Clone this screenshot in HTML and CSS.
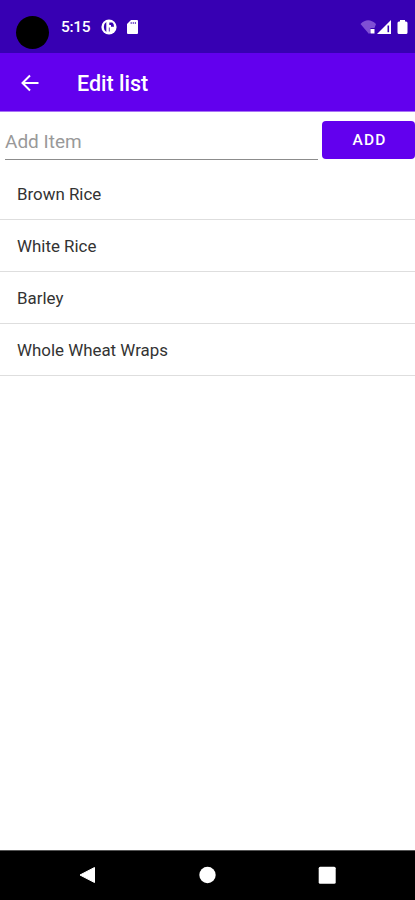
FILE: index.html
```html
<!DOCTYPE html>
<html lang="en">
<head>
<meta charset="utf-8">
<meta name="viewport" content="width=device-width, initial-scale=1">
<title>Edit list</title>
<link rel="stylesheet" href="styles.css">
</head>
<body>
<div class="screen">
  <div class="status">
    <span class="camera"></span>
    <span class="time">5:15</span>
    <svg class="app-icon" width="16" height="16" viewBox="0 0 16 16"><circle cx="8" cy="8" r="7.6" fill="#fff"/><path d="M5.300 3Q2.800 4.500 2.800 8t2.500 5z" fill="#3700b3"/><path d="M8.300 3.500h3Q13 4.500 13 7.800H10V6H8.300z" fill="#3700b3"/><path d="M8.300 8.500v4" stroke="#3700b3" stroke-width=".8"/></svg>
    <svg class="sd-icon" width="11" height="14" viewBox="0 0 11 14"><path d="M4 0h6q1 0 1 1v12q0 1-1 1H1q-1 0-1-1V4z" fill="#fff"/><path d="M4.200 2v2M6.300 2v2M8.400 2v2" stroke="#7653c9" stroke-width="1.200"/></svg>
    <span class="spacer"></span>
    <svg class="signals" width="48" height="16" viewBox="0 0 48 16"><path d="M.5 4Q8-3.500 16 4L14.500 8H10.500V12.500L9 14z" fill="#7f4fd4"/><path d="M10.500 9h4v4.500h-4z" fill="#fff"/><path d="M31 0v14H17z" fill="#fff"/><path d="M28.300 5.500v6.700" stroke="#3700b3" stroke-width="1.600"/><path d="M40 0h5v1.500h1q1.500 0 1.500 1.500v9.500q0 1.500-1.500 1.500h-7q-1.500 0-1.500-1.500V3q0-1.500 1.500-1.500h1z" fill="#fff"/></svg>
  </div>
  <header class="appbar">
    <svg class="back" width="19" height="18" viewBox="0 0 19 18"><path d="M18.500 9H2.500M10 1.500L2.500 9l7.500 7.500" fill="none" stroke="#fff" stroke-width="2"/></svg>
    <h1>Edit list</h1>
  </header>
  <main>
    <div class="add-row">
      <div class="field">Add Item</div>
      <button class="add">ADD</button>
    </div>
    <ul class="list">
      <li>Brown Rice</li>
      <li>White Rice</li>
      <li>Barley</li>
      <li>Whole Wheat Wraps</li>
    </ul>
  </main>
  <nav class="navbar">
    <svg width="18" height="18" viewBox="0 0 18 18"><path d="M16.500 1.500v15L2 9z" fill="#fff" stroke="#fff" stroke-linejoin="round"/></svg>
    <svg width="18" height="18" viewBox="0 0 18 18"><circle cx="9.500" cy="9" r="8.200" fill="#fff"/></svg>
    <svg width="18" height="18" viewBox="0 0 18 18"><rect x=".7" y=".7" width="17" height="17" rx="1.500" fill="#fff"/></svg>
  </nav>
</div>
</body>
</html>
```
FILE: styles.css
```css
* { box-sizing: border-box; }
body { margin: 0; font-family: Roboto, sans-serif; background: #fff; }
.screen { display: flex; flex-direction: column; height: 900px; overflow: hidden; }
.status { display: flex; flex: none; height: 53px; padding: 0 7px 0 16px; background: #3700b3; color: #fff; }
.camera { width: 33px; height: 33px; margin-top: 16px; border-radius: 50%; background: #000; }
.time { width: 40px; margin: 17px 0 0 12px; font-size: 15.5px; font-weight: 500; line-height: 21px; letter-spacing: -.3px; }
.app-icon { margin-top: 19px; }
.sd-icon { margin: 20px 0 0 10px; }
.spacer { flex: 1; }
.signals { margin-top: 20px; }
.appbar { display: flex; flex: none; align-items: center; height: 59px; padding: 3px 0 0 20px; background: #6200ee; border-bottom: 1px solid #a873f5; color: #fff; }
h1 { margin: 1px 0 0 38px; font-size: 21.5px; font-weight: 500; line-height: 28px; }
.back { margin-bottom: 2px; }
main { flex: 1; }
.add-row { display: flex; height: 56px; padding: 9px 0 0 5px; gap: 4px; }
.field { flex: 1; height: 39px; padding-top: 8px; border-bottom: 1px solid #8c8c8c; color: #999; font-size: 19px; line-height: 26px; }
.add { width: 93px; height: 38px; padding: 1px 0 0 2px; border: 0; border-radius: 4px; background: #6200ee; color: #fff; font: 500 15.5px/37px Roboto, sans-serif; letter-spacing: 1.2px; }
.list { margin: 0; padding: 0; list-style: none; }
.list li { height: 52px; padding-left: 17px; border-bottom: 1px solid #dedede; color: #333; font-size: 16.9px; line-height: 52px; }
.navbar { display: flex; flex: none; justify-content: space-between; height: 50px; padding: 15px 79px 0 78px; background: #000; border-top: 1px solid #555; }
```
